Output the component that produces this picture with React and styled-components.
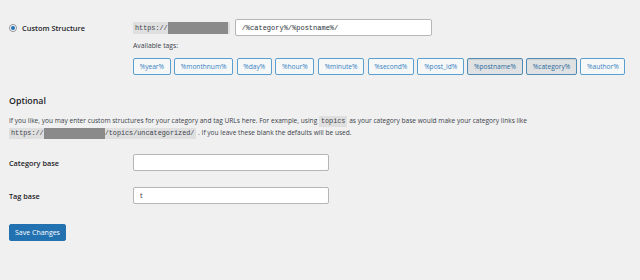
import React from "react";
import styled, { createGlobalStyle } from "styled-components";

const Global = createGlobalStyle`
  html, body { margin: 0; padding: 0; background: #f0f0f1; }
  body { font-family: "Open Sans", "Noto Sans", sans-serif; color: #3c434a; font-size: 6.8px; }
  * { box-sizing: border-box; }
`;

const Page = styled.div`
  width: 640px;
  height: 280px;
  padding: 19px 0 0 9px;
`;

const Row = styled.div`
  display: grid;
  grid-template-columns: 124px 1fr;
  align-items: ${(p) => (p.$top ? "start" : "center")};
`;

const RadioLabel = styled.label`
  display: flex;
  align-items: center;
  gap: 5px;
  font-weight: 600;
  font-size: 7.4px;
  color: #1d2327;
  height: 17px;
`;

const Radio = styled.span`
  width: 8px;
  height: 8px;
  border-radius: 50%;
  border: 1px solid #8c8f94;
  background: #fff;
  display: flex;
  align-items: center;
  justify-content: center;
  &::after {
    content: "";
    width: 4px;
    height: 4px;
    border-radius: 50%;
    background: #2271b1;
  }
`;

const Field = styled.div`
  display: flex;
  flex-direction: column;
`;

const StructLine = styled.div`
  display: flex;
  align-items: center;
  gap: 5px;
  height: 17px;
`;

const Code = styled.code`
  display: inline-flex;
  align-items: center;
  background: rgba(0, 0, 0, 0.07);
  font-family: "Liberation Mono", monospace;
  font-size: 6.8px;
  color: #3c434a;
  padding: 0 2px;
  height: ${(p) => p.$h || 11}px;
  vertical-align: middle;
`;

const Redact = styled.span`
  display: inline-block;
  width: ${(p) => p.$w}px;
  height: ${(p) => p.$h || 11}px;
  background: #8a8a8a;
  vertical-align: middle;
`;

const TextInput = styled.div`
  width: ${(p) => p.$w}px;
  height: 17px;
  background: #fff;
  border: 1px solid #b4b6ba;
  border-radius: 2px;
  display: flex;
  align-items: center;
  padding-left: ${(p) => p.$pl || 6}px;
  font-family: ${(p) => (p.$mono ? '"Liberation Mono", monospace' : "inherit")};
  font-size: 7px;
  color: #2c3338;
`;

const Avail = styled.div`
  margin-top: 4px;
  height: 11px;
  line-height: 11px;
  font-size: 6.8px;
  color: #3c434a;
`;

const Tags = styled.div`
  display: flex;
  gap: 3.5px;
  margin-top: 7px;
`;

const Tag = styled.button`
  height: 17px;
  padding: 0 5.7px;
  font-family: inherit;
  font-size: 6.6px;
  color: ${(p) => (p.$active ? "#2a6a9c" : "#3582c4")};
  background: ${(p) => (p.$active ? "#dfe1e3" : "#f6f7f7")};
  border: 1px solid ${(p) => (p.$active ? "#4f8cb6" : "#5a9fcf")};
  border-radius: 2px;
  box-shadow: ${(p) => (p.$active ? "inset 0 1px 1px rgba(0,0,0,.08)" : "none")};
  cursor: pointer;
`;

const Heading = styled.h2`
  margin: 20px 0 0 0;
  font-size: 8.8px;
  font-weight: 600;
  color: #1d2327;
  line-height: 12px;
`;

const Para = styled.p`
  margin: 8px 0 0 0;
  font-size: 6.6px;
  line-height: 12px;
  color: #3c434a;
  white-space: nowrap;
`;

const FieldLabel = styled.div`
  font-weight: 600;
  font-size: 7.3px;
  color: #1d2327;
`;

const Form = styled.div`
  margin-top: 15px;
  display: flex;
  flex-direction: column;
  gap: 16px;
`;

const Submit = styled.button`
  margin-top: 20px;
  height: 17px;
  width: 57px;
  padding: 0;
  background: #2271b1;
  border: 1px solid #2271b1;
  border-radius: 2px;
  color: #fff;
  font-family: inherit;
  font-size: 7px;
`;

const tags = [
  ["%year%", false],
  ["%monthnum%", false],
  ["%day%", false],
  ["%hour%", false],
  ["%minute%", false],
  ["%second%", false],
  ["%post_id%", false],
  ["%postname%", true],
  ["%category%", true],
  ["%author%", false],
];

export default function App() {
  return (
    <Page>
      <Global />
      <Row $top>
        <RadioLabel>
          <Radio />
          Custom Structure
        </RadioLabel>
        <Field>
          <StructLine>
            <Code $h={12}>
              https://
              <Redact $w={60} $h={12} />
            </Code>
            <TextInput $w={197} $mono>/%category%/%postname%/</TextInput>
          </StructLine>
          <Avail>Available tags:</Avail>
          <Tags>
            {tags.map(([t, a]) => (
              <Tag key={t} $active={a}>
                {t}
              </Tag>
            ))}
          </Tags>
        </Field>
      </Row>
      <Heading>Optional</Heading>
      <Para>
        If you like, you may enter custom structures for your category and tag URLs here. For example, using{" "}
        <Code>topics</Code> as your category base would make your category links like
        <br />
        <Code>
          https://
          <Redact $w={61} />
          /topics/uncategorized/
        </Code>{" "}
        . If you leave these blank the defaults will be used.
      </Para>
      <Form>
        <Row>
          <FieldLabel>Category base</FieldLabel>
          <TextInput $w={196} />
        </Row>
        <Row>
          <FieldLabel>Tag base</FieldLabel>
          <TextInput $w={196}>t</TextInput>
        </Row>
      </Form>
      <Submit>Save Changes</Submit>
    </Page>
  );
}
